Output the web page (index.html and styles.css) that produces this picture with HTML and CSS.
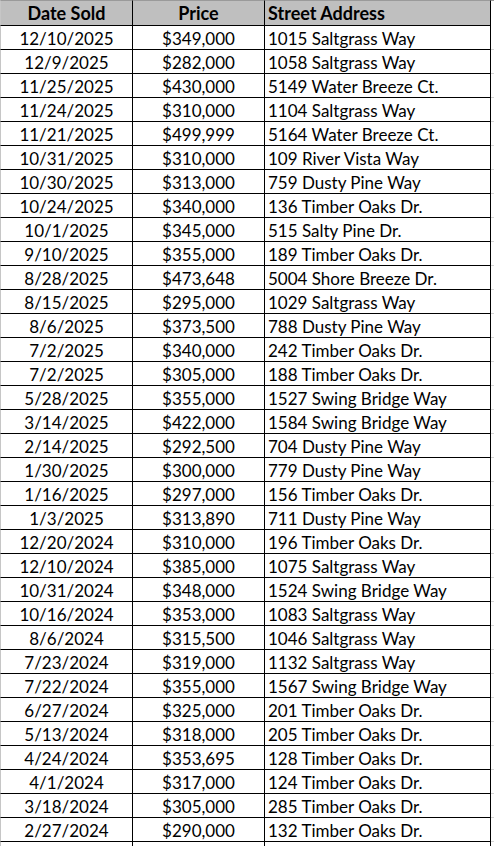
FILE: index.html
```html
<!DOCTYPE html>
<html>
<head>
<meta charset="utf-8">
<link rel="stylesheet" href="styles.css">
</head>
<body>
<div class="sheet">
  <div class="row head">
    <div class="cell c-date">Date Sold</div>
    <div class="cell c-price">Price</div>
    <div class="cell c-addr">Street Address</div>
    <div class="gap"></div>
  </div>
  <div class="row"><div class="cell c-date">12/10/2025</div><div class="cell c-price">$349,000</div><div class="cell c-addr">1015 Saltgrass Way</div><div class="gap"></div></div>
  <div class="row"><div class="cell c-date">12/9/2025</div><div class="cell c-price">$282,000</div><div class="cell c-addr">1058 Saltgrass Way</div><div class="gap"></div></div>
  <div class="row"><div class="cell c-date">11/25/2025</div><div class="cell c-price">$430,000</div><div class="cell c-addr">5149 Water Breeze Ct.</div><div class="gap"></div></div>
  <div class="row"><div class="cell c-date">11/24/2025</div><div class="cell c-price">$310,000</div><div class="cell c-addr">1104 Saltgrass Way</div><div class="gap"></div></div>
  <div class="row"><div class="cell c-date">11/21/2025</div><div class="cell c-price">$499,999</div><div class="cell c-addr">5164 Water Breeze Ct.</div><div class="gap"></div></div>
  <div class="row"><div class="cell c-date">10/31/2025</div><div class="cell c-price">$310,000</div><div class="cell c-addr">109 River Vista Way</div><div class="gap"></div></div>
  <div class="row"><div class="cell c-date">10/30/2025</div><div class="cell c-price">$313,000</div><div class="cell c-addr">759 Dusty Pine Way</div><div class="gap"></div></div>
  <div class="row"><div class="cell c-date">10/24/2025</div><div class="cell c-price">$340,000</div><div class="cell c-addr">136 Timber Oaks Dr.</div><div class="gap"></div></div>
  <div class="row"><div class="cell c-date">10/1/2025</div><div class="cell c-price">$345,000</div><div class="cell c-addr">515 Salty Pine Dr.</div><div class="gap"></div></div>
  <div class="row"><div class="cell c-date">9/10/2025</div><div class="cell c-price">$355,000</div><div class="cell c-addr">189 Timber Oaks Dr.</div><div class="gap"></div></div>
  <div class="row"><div class="cell c-date">8/28/2025</div><div class="cell c-price">$473,648</div><div class="cell c-addr">5004 Shore Breeze Dr.</div><div class="gap"></div></div>
  <div class="row"><div class="cell c-date">8/15/2025</div><div class="cell c-price">$295,000</div><div class="cell c-addr">1029 Saltgrass Way</div><div class="gap"></div></div>
  <div class="row"><div class="cell c-date">8/6/2025</div><div class="cell c-price">$373,500</div><div class="cell c-addr">788 Dusty Pine Way</div><div class="gap"></div></div>
  <div class="row"><div class="cell c-date">7/2/2025</div><div class="cell c-price">$340,000</div><div class="cell c-addr">242 Timber Oaks Dr.</div><div class="gap"></div></div>
  <div class="row"><div class="cell c-date">7/2/2025</div><div class="cell c-price">$305,000</div><div class="cell c-addr">188 Timber Oaks Dr.</div><div class="gap"></div></div>
  <div class="row"><div class="cell c-date">5/28/2025</div><div class="cell c-price">$355,000</div><div class="cell c-addr">1527 Swing Bridge Way</div><div class="gap"></div></div>
  <div class="row"><div class="cell c-date">3/14/2025</div><div class="cell c-price">$422,000</div><div class="cell c-addr">1584 Swing Bridge Way</div><div class="gap"></div></div>
  <div class="row"><div class="cell c-date">2/14/2025</div><div class="cell c-price">$292,500</div><div class="cell c-addr">704 Dusty Pine Way</div><div class="gap"></div></div>
  <div class="row"><div class="cell c-date">1/30/2025</div><div class="cell c-price">$300,000</div><div class="cell c-addr">779 Dusty Pine Way</div><div class="gap"></div></div>
  <div class="row"><div class="cell c-date">1/16/2025</div><div class="cell c-price">$297,000</div><div class="cell c-addr">156 Timber Oaks Dr.</div><div class="gap"></div></div>
  <div class="row"><div class="cell c-date">1/3/2025</div><div class="cell c-price">$313,890</div><div class="cell c-addr">711 Dusty Pine Way</div><div class="gap"></div></div>
  <div class="row"><div class="cell c-date">12/20/2024</div><div class="cell c-price">$310,000</div><div class="cell c-addr">196 Timber Oaks Dr.</div><div class="gap"></div></div>
  <div class="row"><div class="cell c-date">12/10/2024</div><div class="cell c-price">$385,000</div><div class="cell c-addr">1075 Saltgrass Way</div><div class="gap"></div></div>
  <div class="row"><div class="cell c-date">10/31/2024</div><div class="cell c-price">$348,000</div><div class="cell c-addr">1524 Swing Bridge Way</div><div class="gap"></div></div>
  <div class="row"><div class="cell c-date">10/16/2024</div><div class="cell c-price">$353,000</div><div class="cell c-addr">1083 Saltgrass Way</div><div class="gap"></div></div>
  <div class="row"><div class="cell c-date">8/6/2024</div><div class="cell c-price">$315,500</div><div class="cell c-addr">1046 Saltgrass Way</div><div class="gap"></div></div>
  <div class="row"><div class="cell c-date">7/23/2024</div><div class="cell c-price">$319,000</div><div class="cell c-addr">1132 Saltgrass Way</div><div class="gap"></div></div>
  <div class="row"><div class="cell c-date">7/22/2024</div><div class="cell c-price">$355,000</div><div class="cell c-addr">1567 Swing Bridge Way</div><div class="gap"></div></div>
  <div class="row"><div class="cell c-date">6/27/2024</div><div class="cell c-price">$325,000</div><div class="cell c-addr">201 Timber Oaks Dr.</div><div class="gap"></div></div>
  <div class="row"><div class="cell c-date">5/13/2024</div><div class="cell c-price">$318,000</div><div class="cell c-addr">205 Timber Oaks Dr.</div><div class="gap"></div></div>
  <div class="row"><div class="cell c-date">4/24/2024</div><div class="cell c-price">$353,695</div><div class="cell c-addr">128 Timber Oaks Dr.</div><div class="gap"></div></div>
  <div class="row"><div class="cell c-date">4/1/2024</div><div class="cell c-price">$317,000</div><div class="cell c-addr">124 Timber Oaks Dr.</div><div class="gap"></div></div>
  <div class="row"><div class="cell c-date">3/18/2024</div><div class="cell c-price">$305,000</div><div class="cell c-addr">285 Timber Oaks Dr.</div><div class="gap"></div></div>
  <div class="row"><div class="cell c-date">2/27/2024</div><div class="cell c-price">$290,000</div><div class="cell c-addr">132 Timber Oaks Dr.</div><div class="gap"></div></div>
  <div class="row blank"><div class="cell c-date"></div><div class="cell c-price"></div><div class="cell c-addr"></div><div class="gap"></div></div>
</div>
</body>
</html>
```

FILE: styles.css
```css
html, body {
  margin: 0;
  padding: 0;
  background: #ffffff;
}

body {
  font-family: Lato, "Open Sans", "Liberation Sans", sans-serif;
  font-size: 17px;
  color: #000000;
  overflow: hidden;
  width: 494px;
  height: 846px;
}

.sheet {
  display: flex;
  flex-direction: column;
  width: 494px;
}

.row {
  display: grid;
  grid-template-columns: 133px 132px 226px 3px;
  height: 24px;
}

.row.head {
  height: 26px;
  font-weight: bold;
  font-size: 18px;
}

.cell {
  border-right: 1px solid #000000;
  border-bottom: 1px solid #000000;
  line-height: 23px;
  white-space: nowrap;
  overflow: hidden;
  padding-top: 1px;
  box-sizing: border-box;
}

.c-date {
  border-left: 1px solid #c6c6c6;
}

.head .cell {
  background: #bfbfbf;
  border-top: 1px solid #9a9a9a;
  line-height: 24px;
  padding-top: 0;
}

.gap {
  border-bottom: 1px solid #d4d4d4;
  box-sizing: border-box;
}

.head .gap {
  border-top: 1px solid #9a9a9a;
  border-bottom: none;
}

.blank .cell,
.blank .gap {
  border-bottom: none;
}

.c-date,
.c-price {
  text-align: center;
}

.c-addr {
  text-align: left;
  padding-left: 3px;
}
```
